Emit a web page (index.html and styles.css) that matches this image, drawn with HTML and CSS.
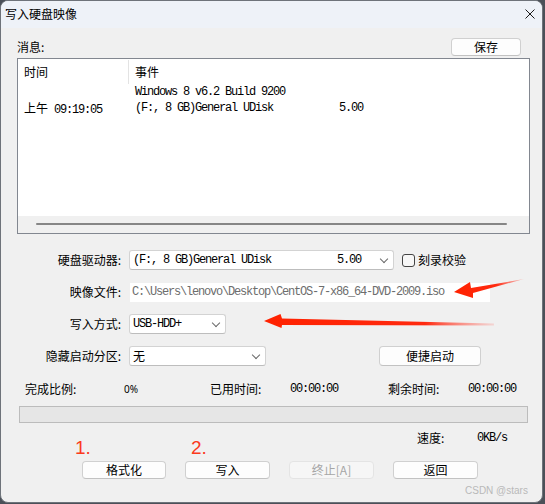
FILE: index.html
```html
<!DOCTYPE html>
<html lang="zh-CN">
<head>
<meta charset="utf-8">
<title>写入硬盘映像</title>
<link rel="stylesheet" href="styles.css">
</head>
<body>
<div class="win">
  <div class="titlebar">
    <span class="title">写入硬盘映像</span>
    <svg class="close" width="10" height="10" viewBox="0 0 10 10"><path d="M0.5 0.5 L9.5 9.5 M9.5 0.5 L0.5 9.5" stroke="#1b1b1b" stroke-width="1"/></svg>
  </div>
  <div class="content">
    <div class="msg-head">
      <span class="lbl">消息:</span>
      <button class="btn btn-save">保存</button>
    </div>
    <div class="listbox">
      <div class="lb-header">
        <div class="col-time hcol">时间</div>
        <div class="col-event">事件</div>
      </div>
      <div class="lb-rows">
        <div class="lb-row">
          <div class="col-time"></div>
          <div class="col-event mono">Windows 8 v6.2 Build 9200</div>
        </div>
        <div class="lb-row">
          <div class="col-time">上午<span class="mono"> 09:19:05</span></div>
          <div class="col-event mono">(F:, 8 GB)General UDisk           5.00</div>
        </div>
      </div>
      <div class="hscroll"><div class="thumb"></div></div>
    </div>

    <div class="form">
      <div class="flabel">硬盘驱动器:</div>
      <div class="fctl">
        <div class="combo combo-drive"><span class="mono">(F:, 8 GB)General UDisk           5.00</span><span class="chev"></span></div>
        <span class="check"></span><span class="check-lbl">刻录校验</span>
      </div>

      <div class="flabel">映像文件:</div>
      <div class="fctl">
        <div class="textbox mono">C:\Users\lenovo\Desktop\CentOS-7-x86_64-DVD-2009.iso</div>
      </div>

      <div class="flabel">写入方式:</div>
      <div class="fctl">
        <div class="combo combo-mode"><span class="mono">USB-HDD+</span><span class="chev"></span></div>
      </div>

      <div class="flabel">隐藏启动分区:</div>
      <div class="fctl">
        <div class="combo combo-hide"><span>无</span><span class="chev"></span></div>
        <button class="btn btn-quick">便捷启动</button>
      </div>
    </div>

    <div class="stats">
      <span>完成比例:</span><span class="num">0%</span>
      <span>已用时间:</span><span class="mono">00:00:00</span>
      <span>剩余时间:</span><span class="mono">00:00:00</span>
    </div>

    <div class="progress"></div>

    <div class="speed">
      <span>速度:</span><span class="mono">0KB/s</span>
    </div>

    <div class="actions">
      <button class="btn act">格式化</button>
      <button class="btn act">写入</button>
      <button class="btn act disabled">终止[A]</button>
      <button class="btn act">返回</button>
    </div>
  </div>

  <span class="anno anno-1">1.</span>
  <span class="anno anno-2">2.</span>
  <span class="watermark">CSDN @stars</span>

  <svg class="arrows" width="543" height="503" viewBox="0 0 543 503">
    <defs>
      <linearGradient id="g1" x1="455" y1="0" x2="524" y2="0" gradientUnits="userSpaceOnUse">
        <stop offset="0" stop-color="#ff2200"/>
        <stop offset="0.6" stop-color="#ff2a10"/>
        <stop offset="1" stop-color="#ff5a50" stop-opacity="0.3"/>
      </linearGradient>
      <linearGradient id="g2" x1="264" y1="0" x2="494" y2="0" gradientUnits="userSpaceOnUse">
        <stop offset="0" stop-color="#ff2200"/>
        <stop offset="0.7" stop-color="#ff2a10"/>
        <stop offset="1" stop-color="#ff6a60" stop-opacity="0.2"/>
      </linearGradient>
    </defs>
    <polygon fill="url(#g1)" points="454,292 470,282 471,288 524,279 473,293 473,298"/>
    <polygon fill="url(#g2)" points="264,321 280.5,314 282,318.5 494,323.5 494,325.5 282,325 281.5,328"/>
  </svg>
</div>
</body>
</html>
```
FILE: styles.css
```css
* { box-sizing: border-box; margin: 0; padding: 0; }

html, body { width: 545px; height: 504px; overflow: hidden; }

body {
  background: #4b5058;
  font-family: "Noto Sans CJK SC", "Noto Sans", sans-serif;
  font-size: 12px;
  line-height: 16px;
  color: #000;
}

.mono {
  font-family: "Liberation Mono", "DejaVu Sans Mono", monospace;
  font-size: 12px;
  letter-spacing: -1.2px;
  white-space: pre;
}

.win {
  position: relative;
  width: 543px;
  height: 503px;
  border: 1px solid #6e737a;
  border-radius: 8px;
  background: #f0f0f0;
  overflow: hidden;
}

.titlebar {
  height: 27px;
  background: #eef2f8;
  display: flex;
  align-items: flex-start;
  justify-content: space-between;
  padding: 5px 7px 0 4px;
}
.title { line-height: 16px; }
.close { margin-top: 3px; }

.content { display: flex; flex-direction: column; }

.msg-head {
  display: flex;
  justify-content: space-between;
  align-items: center;
  margin-top: 10px;
  padding: 0 21px 0 16px;
}
.lbl { line-height: 18px; }

.btn {
  font-family: "Noto Sans CJK SC", "Noto Sans", sans-serif;
  font-size: 12px;
  line-height: 16px;
  color: #000;
  background: #fdfdfd;
  border: 1px solid #d0d0d0;
  border-bottom-color: #c2c2c2;
  border-radius: 4px;
  text-align: center;
}
.btn-save { width: 70px; height: 18px; }

.listbox {
  margin: 2px 0 0 16px;
  width: 513px;
  height: 176px;
  background: #fff;
  border: 1px solid #828790;
  display: flex;
  flex-direction: column;
}
.lb-header { display: flex; height: 25px; line-height: 25px; }
.col-time { width: 111px; padding-left: 6px; }
.hcol { border-right: 1px solid #e3e3e3; margin-top: 1px; line-height: 24px; }
.col-event { padding-left: 6px; }
.lb-rows { flex: 1; }
.lb-row { display: flex; height: 16px; line-height: 16px; }

.hscroll { height: 17px; background: #f0f0f0; padding-top: 7px; }
.thumb { margin-left: 18px; width: 471px; height: 2px; border-radius: 1px; background: #868686; }

.form {
  margin-top: 16px;
  display: grid;
  grid-template-columns: 120px auto;
  column-gap: 8px;
  row-gap: 12px;
  grid-auto-rows: 20px;
  align-items: center;
}
.flabel { text-align: right; }
.fctl { display: flex; align-items: center; height: 20px; }

.combo {
  height: 20px;
  background: #fff;
  border: 1px solid #d3d3d3;
  border-bottom-color: #bdbdbd;
  border-radius: 3px;
  padding-left: 3px;
  display: flex;
  align-items: center;
  justify-content: space-between;
  line-height: 18px;
}
.combo-drive { width: 265px; }
.combo-mode { width: 97px; }
.combo-hide { width: 137px; }
.chev {
  width: 6px; height: 6px;
  border-right: 1px solid #6a6a6a;
  border-bottom: 1px solid #6a6a6a;
  transform: rotate(45deg);
  margin: 0 6px 3px 0;
}

.check {
  width: 13px; height: 13px;
  margin-left: 8px;
  border: 1px solid #444;
  border-radius: 3px;
  background: #f7f7f7;
}
.check-lbl { margin-left: 3px; }

.textbox {
  margin-left: 1px;
  width: 360px;
  height: 19px;
  line-height: 19px;
  background: #fff;
  color: #6d6d6d;
  padding-left: 2px;
}

.btn-quick { margin-left: 113px; width: 102px; height: 20px; }

.stats {
  margin-top: 15px;
  height: 16px;
  padding-left: 24px;
  display: grid;
  grid-template-columns: 99px 86px 80px 98px 80px auto;
  line-height: 16px;
}
.num { font-family: "Noto Sans", sans-serif; font-size: 10px; }

.progress {
  margin: 9px 0 0 18px;
  width: 509px;
  height: 17px;
  background: #e6e6e6;
  border: 1px solid #bcbcbc;
}

.speed {
  margin-top: 7px;
  height: 16px;
  padding-left: 416px;
  display: grid;
  grid-template-columns: 60px auto;
}

.actions {
  margin-top: 15px;
  padding-left: 81px;
  display: flex;
  gap: 19px;
}
.act { width: 85px; height: 18px; }
.act:first-child { width: 84px; }
.disabled { color: #a6a6a6; background: #f6f6f6; border-color: #e4e4e4; }

.anno {
  position: absolute;
  color: #fb3a1c;
  font-family: "Liberation Sans", sans-serif;
  font-size: 19px;
  line-height: 20px;
}
.anno-1 { left: 74px; top: 437px; }
.anno-2 { left: 190px; top: 437px; }

.watermark {
  position: absolute;
  left: 464px;
  top: 483px;
  font-family: "Liberation Sans", sans-serif;
  font-size: 10px;
  line-height: 14px;
  color: #b9b9b9;
}

.arrows { position: absolute; left: -1px; top: -1px; pointer-events: none; }
```
